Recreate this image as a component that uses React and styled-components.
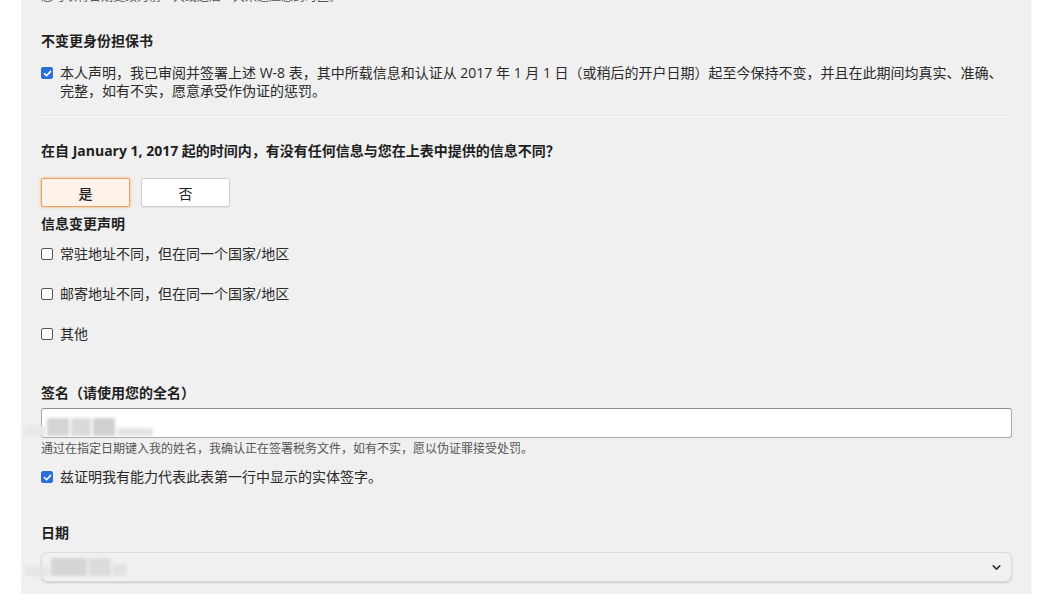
import React, { useState } from "react";
import styled, { createGlobalStyle } from "styled-components";
import { ChevronDown } from "lucide-react";

const GlobalStyle = createGlobalStyle`
  body {
    margin: 0;
    background: #ffffff;
    font-family: "Open Sans", "Noto Sans CJK SC", sans-serif;
    color: #222;
    overflow: hidden;
  }
`;

const Panel = styled.div`
  margin-left: 21px;
  width: 1010px;
  min-height: 594px;
  box-sizing: border-box;
  padding: 0 19px 20px 20px;
  background: #f0f0f0;
  box-shadow: 1px 0 2px rgba(0, 0, 0, 0.04);
`;

const TopNote = styled.div`
  margin-top: -12px;
  font-size: 12px;
  line-height: 18px;
  color: #555;
`;

const Heading = styled.div`
  margin-top: ${(p) => p.$mt || 0}px;
  font-size: ${(p) => p.$size || 14}px;
  line-height: 20px;
  font-weight: 700;
  color: #1f1f1f;
`;

const CheckRow = styled.label`
  display: flex;
  align-items: flex-start;
  gap: 7px;
  margin-top: ${(p) => p.$mt || 0}px;
  font-size: 14px;
  line-height: ${(p) => p.$lh || 20}px;
  color: #2a2a2a;
  cursor: pointer;
`;

const Box = styled.span`
  flex: none;
  width: 12px;
  height: 12px;
  margin-top: ${(p) => p.$top}px;
  box-sizing: border-box;
  border-radius: 2px;
  display: flex;
  align-items: center;
  justify-content: center;
  background: ${(p) => (p.$on ? "#2b6fd8" : "#fff")};
  border: 1px solid ${(p) => (p.$on ? "#2b6fd8" : "#555")};
`;

const Divider = styled.hr`
  margin: 15px 0 0;
  border: none;
  border-top: 1px solid #e4e4e4;
  border-bottom: 1px solid #f8f8f8;
`;

const ButtonRow = styled.div`
  display: flex;
  gap: 11px;
  margin-top: 17px;
`;

const Choice = styled.button`
  width: 89px;
  height: 29px;
  border-radius: 2px;
  font-family: inherit;
  font-size: 14px;
  color: #222;
  font-weight: ${(p) => (p.$active ? 500 : 400)};
  background: ${(p) => (p.$active ? "#fdf3ea" : "#fff")};
  border: 1px solid ${(p) => (p.$active ? "#efa05c" : "#cfcfcf")};
  box-shadow: ${(p) =>
    p.$active ? "0 0 3px rgba(238, 146, 60, 0.7)" : "0 1px 1px rgba(0,0,0,0.06)"};
  cursor: pointer;
`;

const OptionList = styled.div`
  display: flex;
  flex-direction: column;
  gap: 20px;
  margin-top: 10px;
`;

const Field = styled.div`
  position: relative;
  margin-top: ${(p) => p.$mt || 0}px;
`;

const TextInput = styled.input`
  display: block;
  width: 100%;
  height: 30px;
  box-sizing: border-box;
  border: 1px solid #a8a8a8;
  border-top-color: #8f8f8f;
  border-radius: 3px;
  background: #fff;
  padding: 0 8px;
  font-family: inherit;
  font-size: 14px;
`;

const SelectBox = styled.div`
  height: 30px;
  box-sizing: border-box;
  border: 1px solid #dcdcdc;
  border-radius: 7px;
  background: #f1f1f1;
  box-shadow: 0 1px 2px rgba(0, 0, 0, 0.16);
  display: flex;
  align-items: center;
  justify-content: flex-end;
  padding-right: 8px;
  color: #333;
`;

const Redact = styled.span`
  position: absolute;
  left: -16px;
  top: ${(p) => p.$top}px;
  display: flex;
  align-items: flex-end;
  gap: 2px;
  filter: blur(1.5px);
  pointer-events: none;
`;

const Blob = styled.span`
  width: ${(p) => p.$w}px;
  height: ${(p) => p.$h || 18}px;
  background: ${(p) => p.$c || "#d2d2d2"};
`;

const Help = styled.div`
  margin-top: 3px;
  font-size: 12px;
  line-height: 16px;
  color: #555;
`;

const Check = ({ on }) => (
  <svg width="9" height="9" viewBox="0 0 10 10" fill="none">
    {on && (
      <path
        d="M1.6 5.2 L4 7.5 L8.4 2.6"
        stroke="#fff"
        strokeWidth="1.8"
        strokeLinecap="round"
        strokeLinejoin="round"
      />
    )}
  </svg>
);

const Option = ({ on, mt, lh = 20, children, onToggle }) => (
  <CheckRow $mt={mt} $lh={lh} onClick={onToggle}>
    <Box $on={on} $top={(lh - 12) / 2}>
      <Check on={on} />
    </Box>
    <span>{children}</span>
  </CheckRow>
);

export default function App() {
  const [changed, setChanged] = useState(true);
  const [opts, setOpts] = useState([false, false, false]);
  const [certify, setCertify] = useState(true);
  const [capacity, setCapacity] = useState(true);

  const toggle = (i) => setOpts((o) => o.map((v, j) => (j === i ? !v : v)));

  return (
    <>
      <GlobalStyle />
      <Panel>
        <TopNote>您可以将日期更改为前一天或之后一天来适应您的时区。</TopNote>

        <Heading $mt={25}>不变更身份担保书</Heading>
        <Option on={certify} mt={13} lh={18} onToggle={() => setCertify(!certify)}>
          本人声明，我已审阅并签署上述 W-8 表，其中所载信息和认证从 2017 年 1 月 1 日（或稍后的开户日期）起至今保持不变，并且在此期间均真实、准确、完整，如有不实，愿意承受作伪证的惩罚。
        </Option>
        <Divider />

        <Heading $mt={24}>
          在自 January 1, 2017 起的时间内，有没有任何信息与您在上表中提供的信息不同？
        </Heading>
        <ButtonRow>
          <Choice $active={changed} onClick={() => setChanged(true)}>是</Choice>
          <Choice $active={!changed} onClick={() => setChanged(false)}>否</Choice>
        </ButtonRow>

        <Heading $mt={7}>信息变更声明</Heading>
        <OptionList>
          <Option on={opts[0]} onToggle={() => toggle(0)}>
            常驻地址不同，但在同一个国家/地区
          </Option>
          <Option on={opts[1]} onToggle={() => toggle(1)}>
            邮寄地址不同，但在同一个国家/地区
          </Option>
          <Option on={opts[2]} onToggle={() => toggle(2)}>
            其他
          </Option>
        </OptionList>

        <Heading $mt={39}>签名（请使用您的全名）</Heading>
        <Field $mt={5}>
          <TextInput type="text" />
          <Redact $top={10}>
            <Blob $w={20} $h={10} $c="#e8e8e8" />
            <Blob $w={22} $c="#d4d4d4" />
            <Blob $w={20} $c="#dadada" />
            <Blob $w={22} $c="#d0d0d0" />
            <Blob $w={36} $h={8} $c="#e4e4e4" />
          </Redact>
        </Field>
        <Help>通过在指定日期键入我的姓名，我确认正在签署税务文件，如有不实，愿以伪证罪接受处罚。</Help>
        <Option on={capacity} mt={10} onToggle={() => setCapacity(!capacity)}>
          兹证明我有能力代表此表第一行中显示的实体签字。
        </Option>

        <Heading $mt={36}>日期</Heading>
        <Field $mt={9}>
          <SelectBox>
            <ChevronDown size={13} strokeWidth={3} />
          </SelectBox>
          <Redact $top={6}>
            <Blob $w={24} $h={10} $c="#e6e6e6" />
            <Blob $w={36} $c="#d6d6d6" />
            <Blob $w={22} $c="#dcdcdc" />
            <Blob $w={14} $h={12} $c="#e2e2e2" />
          </Redact>
        </Field>
      </Panel>
    </>
  );
}
